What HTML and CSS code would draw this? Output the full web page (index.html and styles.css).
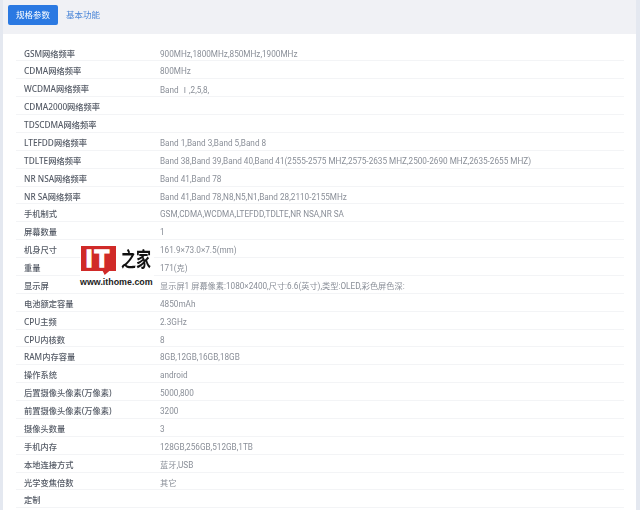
FILE: index.html
```html
<!DOCTYPE html>
<html lang="zh">
<head>
<meta charset="utf-8">
<title>规格参数</title>
<link rel="stylesheet" href="styles.css">
</head>
<body>
<div class="panel">
  <div class="tabs">
    <span class="tab active">规格参数</span>
    <span class="tab">基本功能</span>
  </div>
  <div class="table">
    <div class="row"><span class="k">GSM网络频率</span><span class="v">900MHz,1800MHz,850MHz,1900MHz</span></div>
    <div class="row"><span class="k">CDMA网络频率</span><span class="v">800MHz</span></div>
    <div class="row"><span class="k">WCDMA网络频率</span><span class="v">Band <span class="cjk">Ⅰ</span>,2,5,8,</span></div>
    <div class="row"><span class="k">CDMA2000网络频率</span><span class="v"></span></div>
    <div class="row"><span class="k">TDSCDMA网络频率</span><span class="v"></span></div>
    <div class="row"><span class="k">LTEFDD网络频率</span><span class="v">Band 1,Band 3,Band 5,Band 8</span></div>
    <div class="row"><span class="k">TDLTE网络频率</span><span class="v">Band 38,Band 39,Band 40,Band 41(2555-2575 MHZ,2575-2635 MHZ,2500-2690 MHZ,2635-2655 MHZ)</span></div>
    <div class="row"><span class="k">NR NSA网络频率</span><span class="v">Band 41,Band 78</span></div>
    <div class="row"><span class="k">NR SA网络频率</span><span class="v">Band 41,Band 78,N8,N5,N1,Band 28,2110-2155MHz</span></div>
    <div class="row"><span class="k">手机制式</span><span class="v">GSM,CDMA,WCDMA,LTEFDD,TDLTE,NR NSA,NR SA</span></div>
    <div class="row"><span class="k">屏幕数量</span><span class="v">1</span></div>
    <div class="row"><span class="k">机身尺寸</span><span class="v">161.9×73.0×7.5(mm)</span></div>
    <div class="row"><span class="k">重量</span><span class="v">171(克)</span></div>
    <div class="row"><span class="k">显示屏</span><span class="v">显示屏1 屏幕像素:1080×2400,尺寸:6.6(英寸),类型:OLED,彩色屏色深:</span></div>
    <div class="row"><span class="k">电池额定容量</span><span class="v">4850mAh</span></div>
    <div class="row"><span class="k">CPU主频</span><span class="v">2.3GHz</span></div>
    <div class="row"><span class="k">CPU内核数</span><span class="v">8</span></div>
    <div class="row"><span class="k">RAM内存容量</span><span class="v">8GB,12GB,16GB,18GB</span></div>
    <div class="row"><span class="k">操作系统</span><span class="v">android</span></div>
    <div class="row"><span class="k">后置摄像头像素(万像素)</span><span class="v">5000,800</span></div>
    <div class="row"><span class="k">前置摄像头像素(万像素)</span><span class="v">3200</span></div>
    <div class="row"><span class="k">摄像头数量</span><span class="v">3</span></div>
    <div class="row"><span class="k">手机内存</span><span class="v">128GB,256GB,512GB,1TB</span></div>
    <div class="row"><span class="k">本地连接方式</span><span class="v">蓝牙,USB</span></div>
    <div class="row"><span class="k">光学变焦倍数</span><span class="v">其它</span></div>
    <div class="row"><span class="k">定制</span><span class="v"></span></div>
  </div>
</div>
<div class="watermark">
  <div class="wm-top">
    <div class="wm-badge">IT<svg class="wm-tail" viewBox="0 0 10 6" width="10" height="4"><path d="M0 0H10L3 6Z" fill="#d02a28"/></svg></div>
    <span class="wm-cn">之家</span>
  </div>
  <div class="wm-url">www.ithome.com</div>
</div>
</body>
</html>
```
FILE: styles.css
```css
html, body {
  margin: 0;
  padding: 0;
  height: 510px;
  overflow: hidden;
  background: #fff;
}
body {
  position: relative;
  font-family: "Noto Sans", "Noto Sans CJK SC", sans-serif;
  background: #e4e8f0;
  padding: 0 4px 0 3px;
  box-sizing: border-box;
}
.panel {
  background: #fff;
  height: 510px;
  filter: blur(0.35px);
}
.tabs {
  background: #f0f1f5;
  height: 34px;
  box-sizing: border-box;
  padding: 5px 0 0 5px;
  display: flex;
  align-items: flex-start;
}
.tab {
  font-size: 8.5px;
  line-height: 20px;
  color: #4a86d8;
  padding: 0 8px;
  border-radius: 2px;
}
.tab.active {
  background: #2b79e2;
  color: #fff;
}
.table {
  margin: 9.6px 12px 0 13px;
}
.row {
  display: flex;
  height: 17.88px;
  box-sizing: border-box;
  border-bottom: 1px solid #f3f4f6;
  padding-left: 8px;
  line-height: 20px;
  white-space: nowrap;
}
.k {
  width: 136px;
  flex: none;
  font-size: 8.25px;
  color: #555b66;
  font-weight: 500;
}
.v {
  font-family: Roboto, "Noto Sans CJK SC", sans-serif;
  font-size: 8.2px;
  color: #8a8f98;
}
.cjk {
  font-family: "Noto Sans CJK SC", sans-serif;
}
.watermark {
  position: absolute;
  left: 80px;
  top: 246px;
  width: 74px;
  background: rgba(255,255,255,0.9);
}
.wm-top {
  display: flex;
  align-items: flex-start;
  height: 31px;
}
.wm-badge {
  position: relative;
  width: 35px;
  height: 25px;
  margin-left: 1px;
  background: #d02a28;
  color: #fff;
  font: bold 24px/25px "Liberation Sans", sans-serif;
  -webkit-text-stroke: 1.4px #fff;
  letter-spacing: 2px;
  text-align: center;
}
.wm-tail {
  position: absolute;
  left: 20px;
  top: 25px;
  display: block;
}
.wm-cn {
  display: inline-block;
  margin-left: 5px;
  font: 700 15px/25px "Noto Sans CJK SC", sans-serif;
  color: #111;
  transform: scaleY(1.35);
  transform-origin: center;
}
.wm-url {
  font: bold 8.9px/10px "Liberation Sans", sans-serif;
  color: #222;
  white-space: nowrap;
}
```
